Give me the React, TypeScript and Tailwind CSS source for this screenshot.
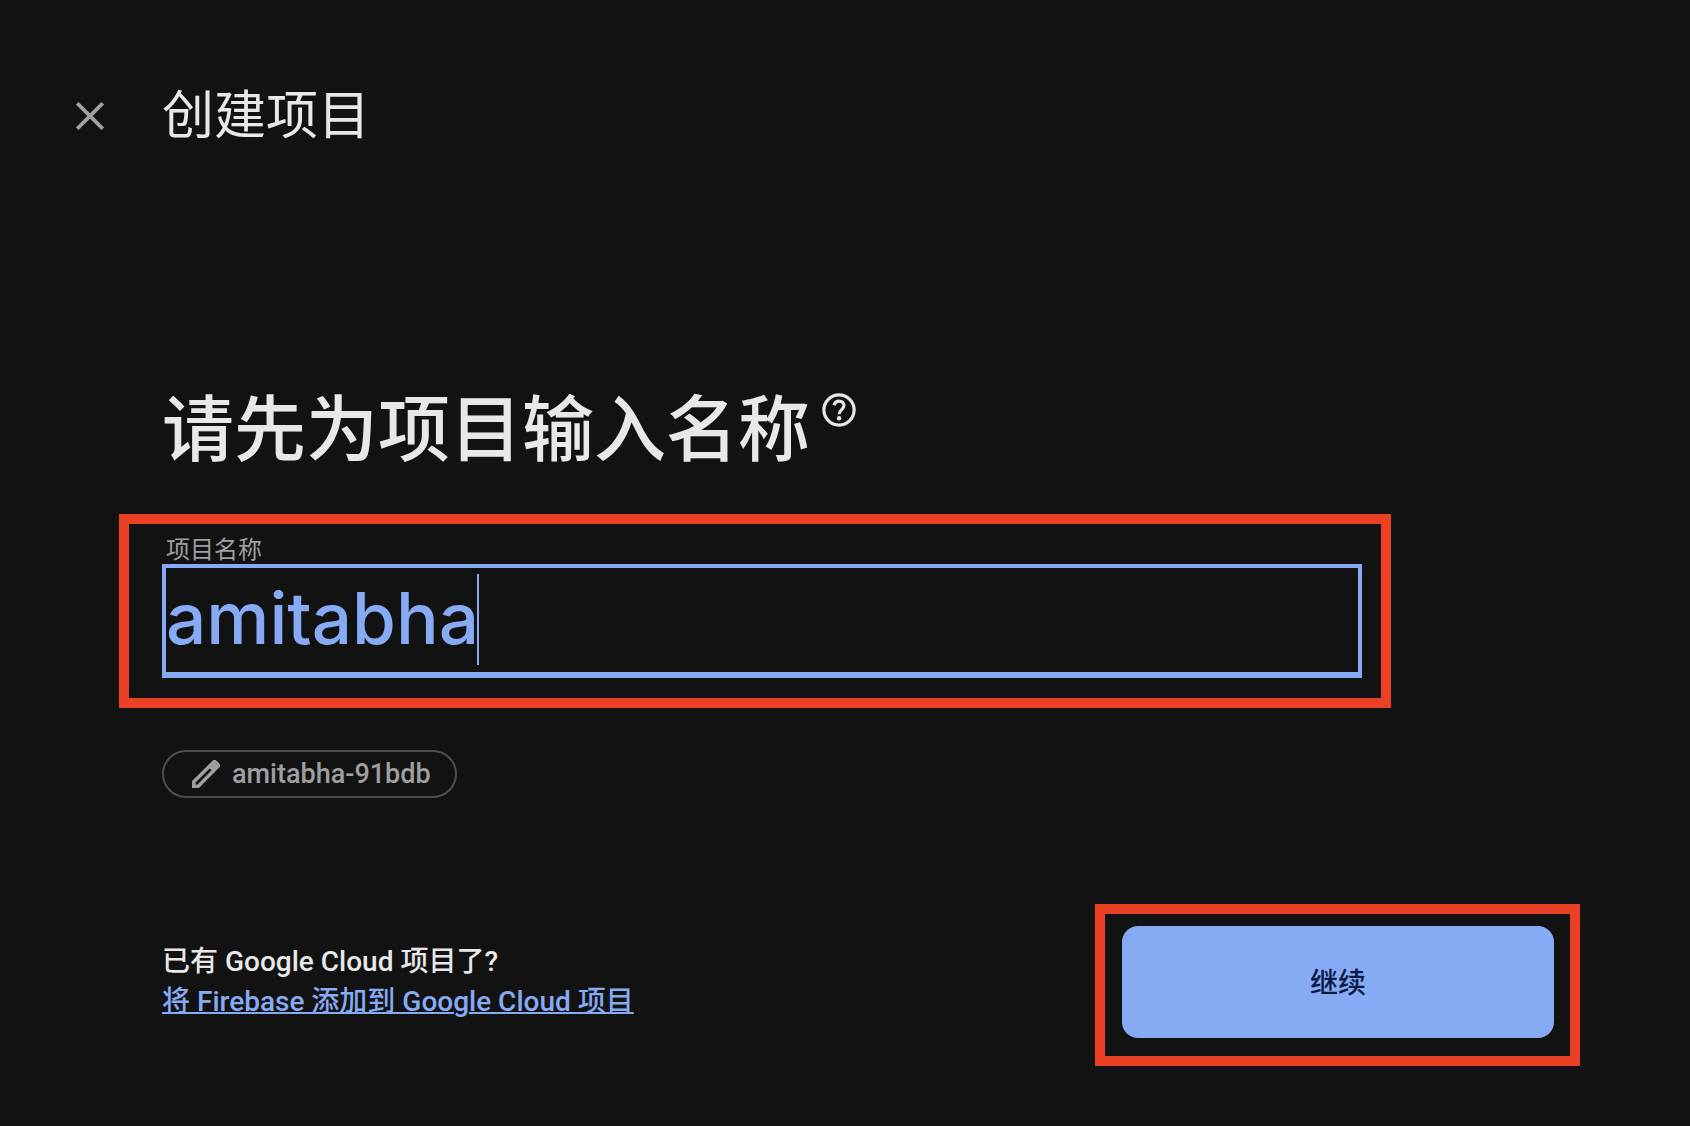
import { useState } from 'react';

function CloseIcon() {
  return (
    <svg viewBox="0 0 28 28" className="size-7" stroke="currentColor" strokeWidth="3.8" aria-hidden="true">
      <path d="M1.3 1.3 26.7 26.7M26.7 1.3 1.3 26.7" />
    </svg>
  );
}

function HelpIcon() {
  return (
    <svg viewBox="0 0 34 34" className="size-[34px]" fill="none" stroke="currentColor" aria-hidden="true">
      <circle cx="17" cy="17" r="15.1" strokeWidth="3.2" />
      <path d="M12 12.2C12.800 9.500 14.600 8.100 17.100 8.100c2.900 0 4.900 1.900 4.900 4.500 0 3.700-4.900 4.300-4.900 8.600" strokeWidth="3.100" />
      <circle cx="17.100" cy="25.200" r="2.200" fill="currentColor" stroke="none" />
    </svg>
  );
}

function PencilIcon() {
  return (
    <svg viewBox="0 0 28 28" className="size-7" fill="currentColor" fillRule="evenodd" aria-hidden="true">
      <path d="M0 28v-7L20.200 1a3.200 3.200 0 0 1 4.600 0l2.200 2.200a3.200 3.200 0 0 1 0 4.600L7 28ZM3.600 24.400h1.900L19.600 10.300 17.700 8.400 3.600 22.500Z" />
    </svg>
  );
}

export default function App() {
  const [name, setName] = useState('amitabha');

  return (
    <div className="min-h-screen bg-[#121212] pt-[75px] pb-[60px] font-[Roboto,'Noto_Sans_CJK_SC',sans-serif] text-[#e8e8e8]">
      <header className="flex items-center gap-[58px] px-[76px]">
        <button type="button" aria-label="关闭" className="text-[#9f9f9f]">
          <CloseIcon />
        </button>
        <h1 className="pt-0.5 text-[52px] leading-[80px]">创建项目</h1>
      </header>

      <main className="pt-[225px] pr-[136px] pl-[162px]">
        <div className="flex items-start gap-3">
          <h2 className="text-[72px] leading-[98px] font-medium">请先为项目输入名称</h2>
          <button type="button" aria-label="帮助" className="mt-[11px]">
            <HelpIcon />
          </button>
        </div>

        <div className="relative mt-14 max-w-[1200px]">
          <label htmlFor="project-name" className="block px-1 text-2xl leading-7 text-[#9f9f9f]">
            项目名称
          </label>
          <div className="relative">
            <input
              id="project-name"
              type="text"
              value={name}
              onChange={(e) => setName(e.target.value)}
              className="block h-[114px] w-full border-4 border-b-[6px] border-[#86aaf4] bg-transparent pb-1 font-[Inter,sans-serif] text-[71px] font-medium text-[#86aaf4] caret-transparent outline-none"
            />
            <span className="absolute top-[10px] left-[315px] h-[91px] w-0.5 bg-[#86aaf4]" aria-hidden="true" />
          </div>
          <div className="pointer-events-none absolute -top-[22px] -right-[29px] -bottom-[30px] -left-[43px] border-[10px] border-[#ea4025]" aria-hidden="true" />
        </div>

        <button
          type="button"
          className="mt-[72px] flex h-12 items-center gap-3 rounded-full border-2 border-[#4b4f54] pr-6 pl-7 text-[27px] font-medium text-[#9f9f9f]"
        >
          <PencilIcon />
          amitabha-91bdb
        </button>

        <footer className="mt-32 flex items-center justify-between gap-8">
          <div className="text-[28px] leading-10 font-medium">
            <p>已有 Google Cloud 项目了?</p>
            <a href="#add-firebase" className="text-[#86aaf4] underline decoration-2">
              将 Firebase 添加到 Google Cloud 项目
            </a>
          </div>
          <div className="relative">
            <button type="button" className="h-28 w-[432px] rounded-2xl bg-[#86aaf4] pt-1 text-[28px] font-medium text-[#071a45]">
              继续
            </button>
            <div className="pointer-events-none absolute -top-[22px] -right-[26px] -bottom-[28px] -left-[27px] border-[10px] border-[#ea4025]" aria-hidden="true" />
          </div>
        </footer>
      </main>
    </div>
  );
}
